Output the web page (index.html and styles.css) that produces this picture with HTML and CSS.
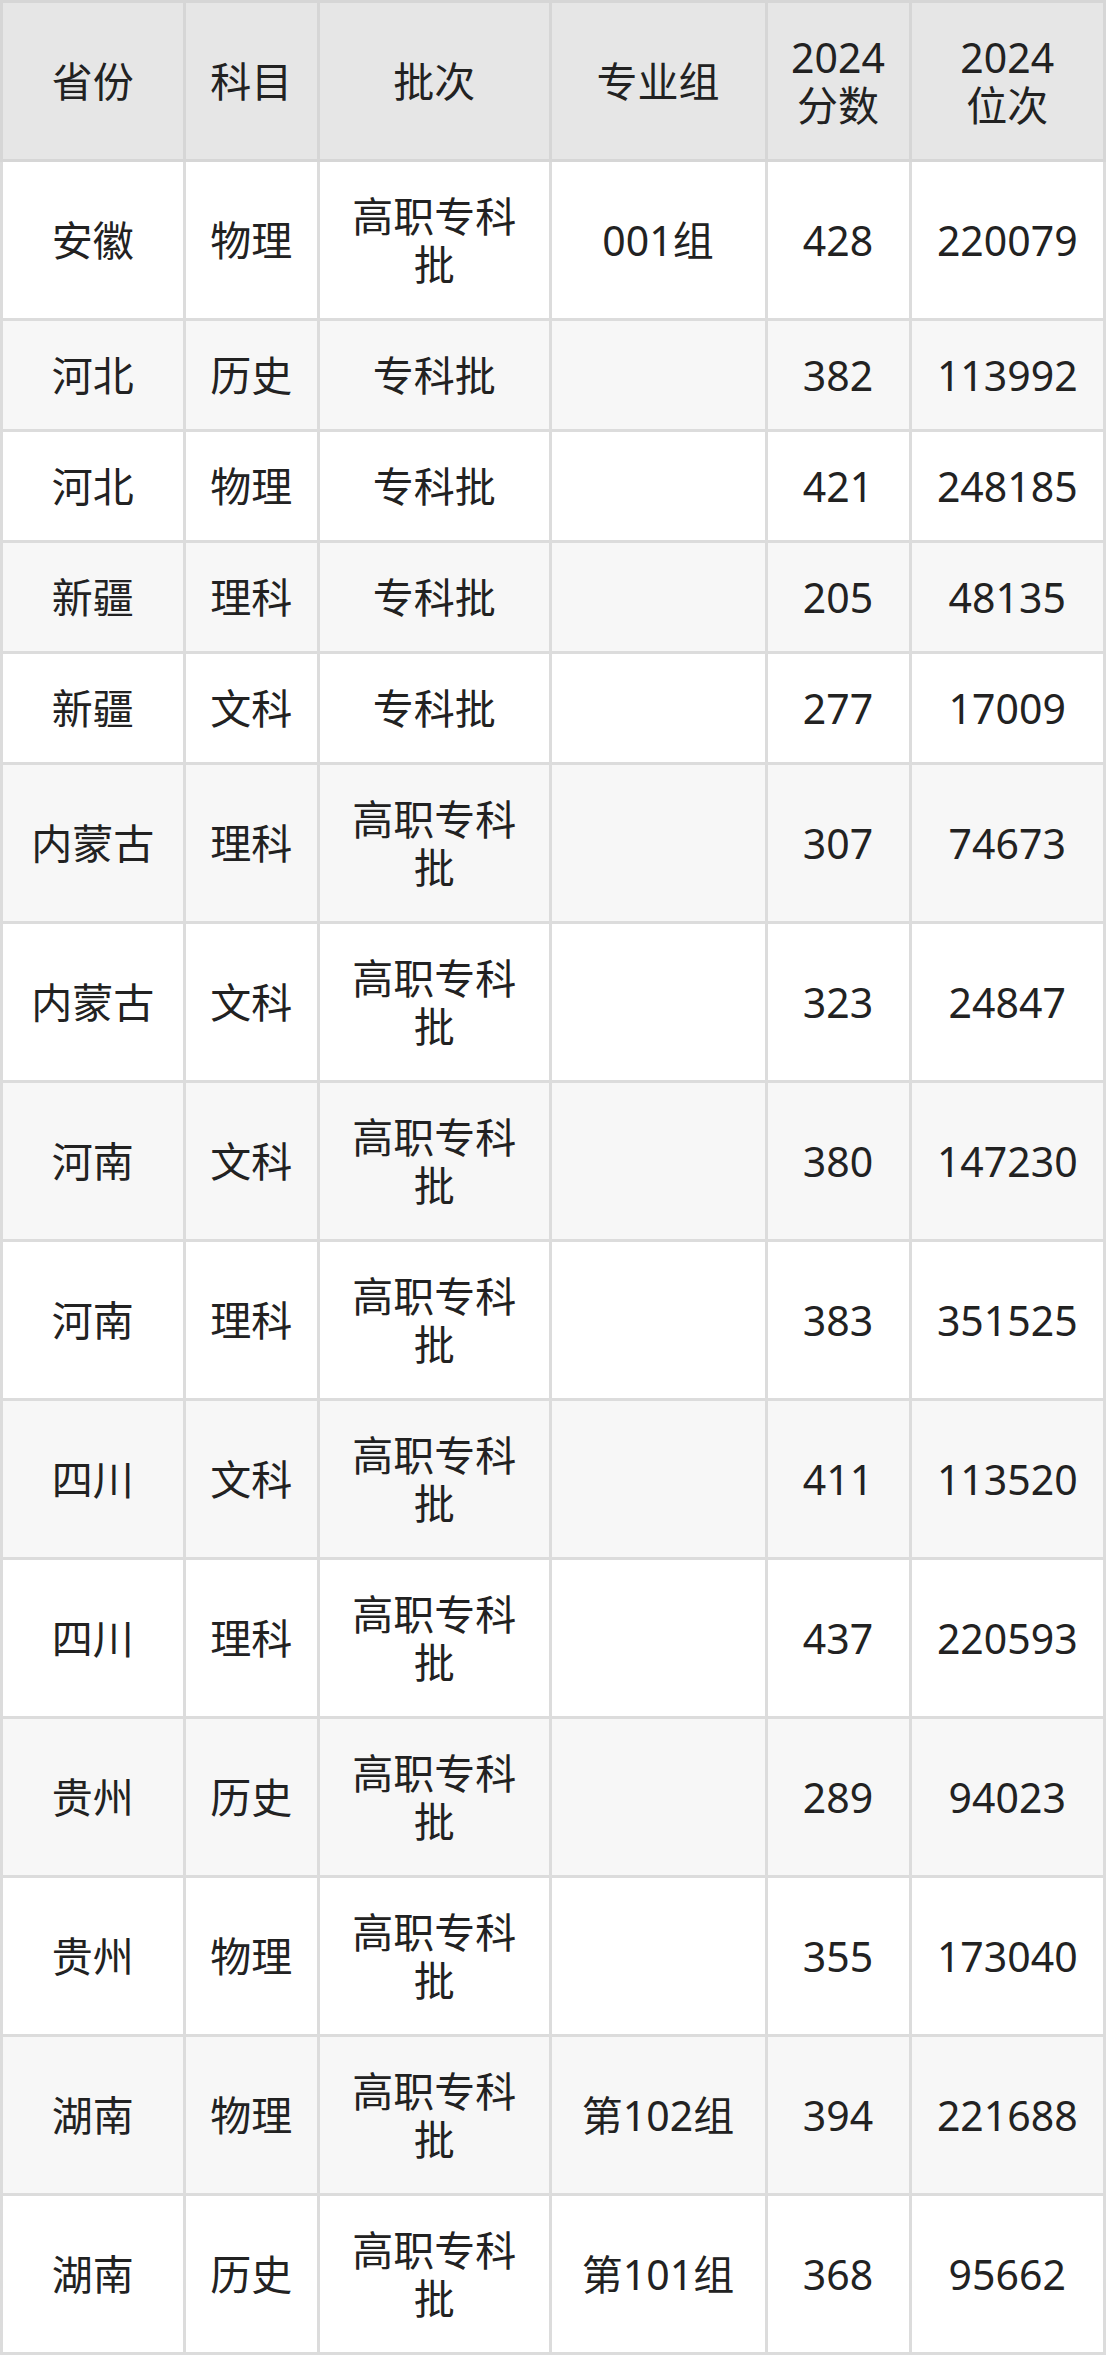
FILE: index.html
```html
<!DOCTYPE html>
<html lang="zh-CN">
<head>
<meta charset="utf-8">
<title>分数线</title>
<link rel="stylesheet" href="styles.css">
</head>
<body>
<table class="score-table">
  <colgroup>
    <col class="c1"><col class="c2"><col class="c3"><col class="c4"><col class="c5"><col class="c6">
  </colgroup>
  <thead>
    <tr><th>省份</th><th>科目</th><th>批次</th><th>专业组</th><th>2024<br>分数</th><th>2024<br>位次</th></tr>
  </thead>
  <tbody>
    <tr><td>安徽</td><td>物理</td><td>高职专科批</td><td>001组</td><td>428</td><td>220079</td></tr>
    <tr><td>河北</td><td>历史</td><td>专科批</td><td></td><td>382</td><td>113992</td></tr>
    <tr><td>河北</td><td>物理</td><td>专科批</td><td></td><td>421</td><td>248185</td></tr>
    <tr><td>新疆</td><td>理科</td><td>专科批</td><td></td><td>205</td><td>48135</td></tr>
    <tr><td>新疆</td><td>文科</td><td>专科批</td><td></td><td>277</td><td>17009</td></tr>
    <tr><td>内蒙古</td><td>理科</td><td>高职专科批</td><td></td><td>307</td><td>74673</td></tr>
    <tr><td>内蒙古</td><td>文科</td><td>高职专科批</td><td></td><td>323</td><td>24847</td></tr>
    <tr><td>河南</td><td>文科</td><td>高职专科批</td><td></td><td>380</td><td>147230</td></tr>
    <tr><td>河南</td><td>理科</td><td>高职专科批</td><td></td><td>383</td><td>351525</td></tr>
    <tr><td>四川</td><td>文科</td><td>高职专科批</td><td></td><td>411</td><td>113520</td></tr>
    <tr><td>四川</td><td>理科</td><td>高职专科批</td><td></td><td>437</td><td>220593</td></tr>
    <tr><td>贵州</td><td>历史</td><td>高职专科批</td><td></td><td>289</td><td>94023</td></tr>
    <tr><td>贵州</td><td>物理</td><td>高职专科批</td><td></td><td>355</td><td>173040</td></tr>
    <tr><td>湖南</td><td>物理</td><td>高职专科批</td><td>第102组</td><td>394</td><td>221688</td></tr>
    <tr><td>湖南</td><td>历史</td><td>高职专科批</td><td>第101组</td><td>368</td><td>95662</td></tr>
  </tbody>
</table>
</body>
</html>
```

FILE: styles.css
```css
html, body {
  margin: 0;
  padding: 0;
  background: #ffffff;
}

body {
  font-family: "Noto Sans", "Noto Sans CJK SC", sans-serif;
  color: #222222;
}

.score-table {
  border-collapse: collapse;
  table-layout: fixed;
  width: 1106px;
  font-size: 41px;
  line-height: 48px;
}

.c1 { width: 182.5px; }
.c2 { width: 134.5px; }
.c3 { width: 231.5px; }
.c4 { width: 216px; }
.c5 { width: 144px; }
.c6 { width: 194.5px; }

.score-table th,
.score-table td {
  border: 3px solid #dcdcdc;
  padding: 30px 14px;
  text-align: center;
  vertical-align: middle;
  font-weight: 400;
}

.score-table th {
  background: #e6e6e6;
  border-color: #d6d6d6;
}

.score-table tbody tr:nth-child(even) td {
  background: #f7f7f7;
}
```
